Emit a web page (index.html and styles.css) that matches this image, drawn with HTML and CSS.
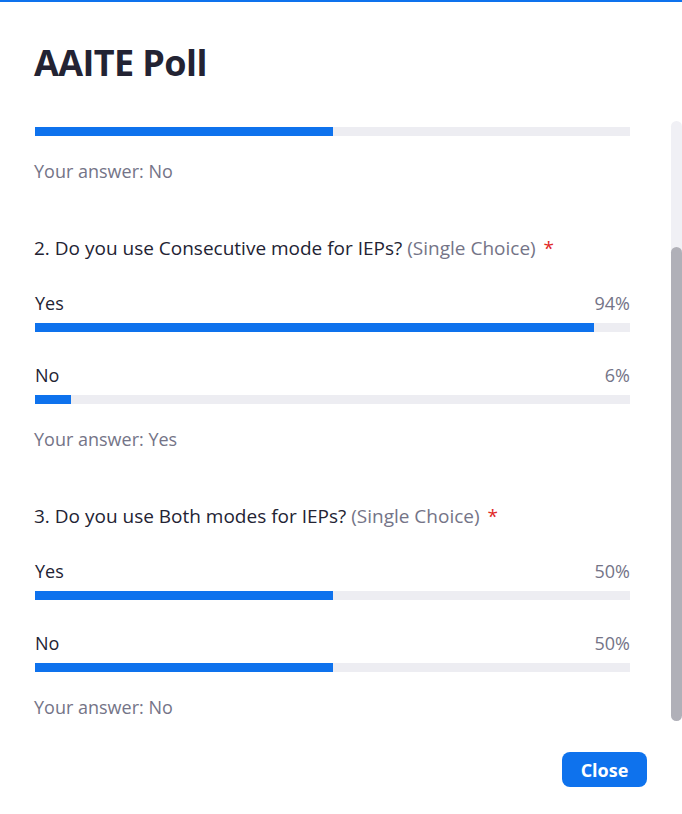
FILE: index.html
```html
<!DOCTYPE html>
<html lang="en">
<head>
<meta charset="utf-8">
<title>AAITE Poll</title>
<link rel="stylesheet" href="styles.css">
</head>
<body>
<div class="dialog">
  <div class="topline"></div>
  <header class="header">
    <h1 class="title">AAITE Poll</h1>
  </header>
  <div class="scroll">
    <div class="content">
      <div class="question first">
        <div class="option">
          <div class="bar"><div class="fill" style="width:50%"></div></div>
        </div>
        <div class="answer">Your answer: No</div>
      </div>

      <div class="question">
        <div class="qtext">2. Do you use Consecutive mode for IEPs? <span class="qtype">(Single Choice)</span> <span class="req">*</span></div>
        <div class="option">
          <div class="orow"><span class="olabel">Yes</span><span class="opct">94%</span></div>
          <div class="bar"><div class="fill" style="width:94%"></div></div>
        </div>
        <div class="option">
          <div class="orow"><span class="olabel">No</span><span class="opct">6%</span></div>
          <div class="bar"><div class="fill" style="width:6%"></div></div>
        </div>
        <div class="answer">Your answer: Yes</div>
      </div>

      <div class="question">
        <div class="qtext">3. Do you use Both modes for IEPs? <span class="qtype">(Single Choice)</span> <span class="req">*</span></div>
        <div class="option">
          <div class="orow"><span class="olabel">Yes</span><span class="opct">50%</span></div>
          <div class="bar"><div class="fill" style="width:50%"></div></div>
        </div>
        <div class="option">
          <div class="orow"><span class="olabel">No</span><span class="opct">50%</span></div>
          <div class="bar"><div class="fill" style="width:50%"></div></div>
        </div>
        <div class="answer">Your answer: No</div>
      </div>
    </div>
    <div class="scrollbar"><div class="thumb"></div></div>
  </div>
  <footer class="footer">
    <button class="close">Close</button>
  </footer>
</div>
</body>
</html>
```
FILE: styles.css
```css
* { box-sizing: border-box; }
html, body { margin: 0; padding: 0; background: #ffffff; }
body {
  font-family: "Open Sans", "Noto Sans", sans-serif;
  color: #232333;
  width: 682px;
  height: 814px;
  overflow: hidden;
}
.dialog { width: 682px; height: 814px; display: flex; flex-direction: column; }
.topline { height: 2px; background: #0e72ed; flex: none; }
.header { padding: 37px 34px 0; height: 119px; flex: none; }
.title {
  margin: 0;
  font-size: 36px;
  line-height: 48px;
  font-weight: 700;
  color: #232333;
  letter-spacing: -0.6px;
}
.scroll {
  position: relative;
  height: 600px;
  flex: none;
}
.content { padding: 6px 52px 0 34px; }
.question { margin-top: 53px; }
.question.first { margin-top: 0; }
.qtext { font-size: 19px; line-height: 24px; margin-bottom: 31px; }
.qtype { color: #747487; }
.req { color: #e02828; margin-left: 3px; }
.option { margin-top: 31px; }
.qtext + .option, .question.first .option { margin-top: 0; }
.orow { display: flex; justify-content: space-between; font-size: 18px; line-height: 24px; padding: 0 0 0 1px; }
.opct { color: #747487; }
.bar { margin: 8px 0 0 1px; height: 9px; background: #ededf2; }
.question.first .bar { margin-top: 0; }
.fill { height: 100%; background: #0e72ed; }
.answer { margin-top: 23px; font-size: 18px; line-height: 24px; color: #747487; }
.scrollbar {
  position: absolute;
  right: 0;
  top: 0;
  width: 11px;
  height: 600px;
  background: #f0f0f5;
  border-radius: 6px;
}
.thumb {
  position: absolute;
  left: 0;
  right: 0;
  top: 126px;
  bottom: 0;
  background: #b0b0b8;
  border-radius: 6px;
}
.footer { display: flex; justify-content: flex-end; padding: 31px 35px 0 0; }
.close {
  width: 85px;
  height: 35px;
  border: none;
  border-radius: 8px;
  background: #0e72ed;
  color: #ffffff;
  font-family: "Open Sans", "Noto Sans", sans-serif;
  font-size: 18px;
  font-weight: 700;
  padding: 0;
  cursor: pointer;
}
```
